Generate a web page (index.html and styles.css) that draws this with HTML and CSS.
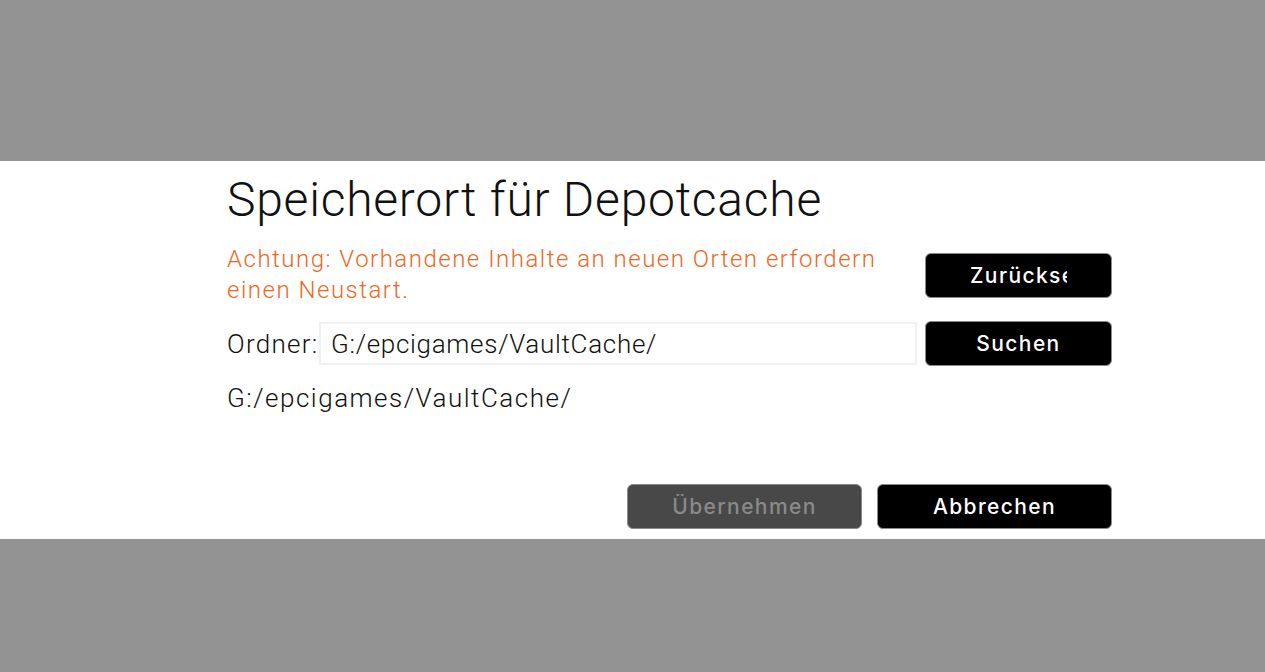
FILE: index.html
```html
<!DOCTYPE html>
<html lang="de">
<head>
  <meta charset="UTF-8" />
  <title>Speicherort für Depotcache</title>
  <link rel="stylesheet" href="styles.css">
</head>
<body>
  <div class="dialog">
    <h1 class="title">Speicherort für Depotcache</h1>

    <div class="row warning-row">
      <p class="warning">Achtung: Vorhandene Inhalte an neuen Orten erfordern einen Neustart.</p>
      <button class="btn"><span class="btn-label">Zurücksetzen</span></button>
    </div>

    <div class="row folder-row">
      <label for="folderInput" class="folder-label">Ordner:</label>
      <input id="folderInput" class="folder-input" type="text" value="G:/epcigames/VaultCache/" />
      <button class="btn"><span class="btn-label">Suchen</span></button>
    </div>

    <div class="current-path">G:/epcigames/VaultCache/</div>

    <div class="actions">
      <button class="btn btn-wide btn-disabled" disabled><span class="btn-label">Übernehmen</span></button>
      <button class="btn btn-wide"><span class="btn-label">Abbrechen</span></button>
    </div>
  </div>
</body>
</html>
```

FILE: styles.css
```css
:root {
  --backdrop: #939393;
  --accent: #f0671d; /* orange warning */
}

html,
body {
  margin: 0;
  padding: 0;
  height: 100%;
}

body {
  background: var(--backdrop);
  font-family: Roboto, "Liberation Sans", sans-serif;
  color: #111111;
  padding-top: 161px;
  box-sizing: border-box;
}

.dialog {
  background: #ffffff;
  height: 378px;
  box-sizing: border-box;
  padding: 11px 153px 10px 227px;
  display: flex;
  flex-direction: column;
}

.title {
  margin: 0;
  font-size: 48px;
  font-weight: 300;
  letter-spacing: 0.75px;
  line-height: 55px;
}

/* ROWS */
.row {
  display: flex;
  align-items: center;
}

.warning-row {
  margin-top: 26px;
  align-items: flex-start;
  gap: 8px;
}

.warning {
  flex: 1;
  margin: -9px 0 0;
  color: var(--accent);
  font-size: 24px;
  font-weight: 300;
  letter-spacing: 1.5px;
  line-height: 31px;
}

.folder-row {
  margin-top: 15px;
}

.folder-label {
  font-size: 26px;
  font-weight: 300;
  letter-spacing: 1.3px;
  width: 92px;
}

.folder-input {
  flex: 1;
  height: 43px;
  box-sizing: border-box;
  border: 2px solid #f1f1f1;
  padding: 0 10px;
  font-family: inherit;
  font-size: 26px;
  font-weight: 300;
  letter-spacing: 0.7px;
  color: #111111;
  outline: none;
  margin-right: 8px;
}

.current-path {
  margin-top: 15px;
  font-size: 26px;
  font-weight: 300;
  letter-spacing: 1.5px;
  line-height: 34px;
}

/* BUTTONS */
.btn {
  width: 187px;
  height: 45px;
  flex: none;
  box-sizing: border-box;
  padding: 0 44px;
  background: #000000;
  color: #ffffff;
  border: 1px solid #8a8a8a;
  border-radius: 6px;
  font-family: Inter, "DejaVu Sans", sans-serif;
  font-size: 21px;
  font-weight: 500;
  letter-spacing: 1.4px;
  cursor: pointer;
}

.btn-label {
  display: block;
  overflow: hidden;
  white-space: nowrap;
  text-align: center;
}

.btn-wide {
  width: 235px;
  padding: 0 20px;
}

.btn-disabled {
  background: #484848;
  color: #8a8a8a;
  cursor: default;
}

.actions {
  margin-top: auto;
  display: flex;
  justify-content: flex-end;
  gap: 15px;
}
```
